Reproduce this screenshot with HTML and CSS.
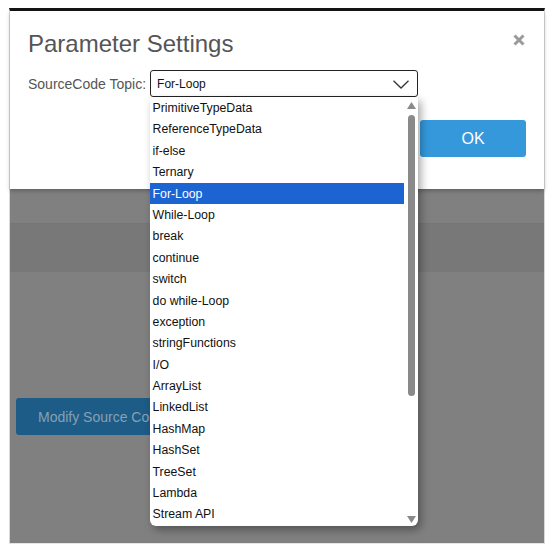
FILE: index.html
```html
<!DOCTYPE html>
<html>
<head>
<meta charset="utf-8">
<link rel="stylesheet" href="styles.css">
</head>
<body>
<div class="frame">
  <div class="modal">
    <div class="modal-head">
      <h1 class="title">Parameter Settings</h1>
      <button class="close" aria-label="close">
        <svg width="12" height="12" viewBox="0 0 12 12"><path d="M1.5 1.5 L10.5 10.5 M10.5 1.5 L1.5 10.5" stroke="#9a9a9a" stroke-width="3" stroke-linecap="butt"/></svg>
      </button>
    </div>
    <div class="field">
      <label class="label">SourceCode Topic:</label>
      <div class="select">
        <span class="select-value">For-Loop</span>
        <svg class="chevron" width="16" height="9" viewBox="0 0 16 9"><polyline points="0.5,0.8 8,8 15.5,0.8" fill="none" stroke="#333" stroke-width="1.3"/></svg>
        <div class="listbox">
          <ul class="options">
            <li>PrimitiveTypeData</li>
            <li>ReferenceTypeData</li>
            <li>if-else</li>
            <li>Ternary</li>
            <li class="selected">For-Loop</li>
            <li>While-Loop</li>
            <li>break</li>
            <li>continue</li>
            <li>switch</li>
            <li>do while-Loop</li>
            <li>exception</li>
            <li>stringFunctions</li>
            <li>I/O</li>
            <li>ArrayList</li>
            <li>LinkedList</li>
            <li>HashMap</li>
            <li>HashSet</li>
            <li>TreeSet</li>
            <li>Lambda</li>
            <li>Stream API</li>
          </ul>
          <div class="scrollbar">
            <svg class="arrow" width="9" height="7" viewBox="0 0 9 7"><polygon points="4.5,0 9,7 0,7" fill="#8a8a8a"/></svg>
            <div class="track"><div class="thumb"></div></div>
            <svg class="arrow" width="9" height="7" viewBox="0 0 9 7"><polygon points="0,0 9,0 4.5,7" fill="#8a8a8a"/></svg>
          </div>
        </div>
      </div>
    </div>
    <div class="actions">
      <button class="ok">OK</button>
    </div>
  </div>
  <div class="gap"></div>
  <div class="band"></div>
  <div class="page-body">
    <button class="modify">Modify Source Code</button>
  </div>
</div>
</body>
</html>
```
FILE: styles.css
```css
* { box-sizing: border-box; }
html, body { margin: 0; padding: 0; background: #ffffff; }
body { font-family: "Liberation Sans", Arial, sans-serif; }

.frame {
  margin: 8px 0 0 9px;
  width: 536px;
  height: 536px;
  border-top: 3px solid #151515;
  border-left: 1px solid #d8d8d8;
  border-right: 1px solid #d8d8d8;
  border-bottom: 1px solid #e4e4e4;
  background: #808080;
  display: flex;
  flex-direction: column;
}

.modal {
  background: #ffffff;
  height: 178px;
  padding: 19px 18px 0 18px;
  display: flex;
  flex-direction: column;
  box-shadow: 0 2px 4px rgba(0,0,0,0.25);
  position: relative;
  z-index: 2;
}

.modal-head {
  display: flex;
  justify-content: space-between;
  align-items: flex-start;
}

.title {
  margin: 0;
  font-size: 24px;
  line-height: 28px;
  font-weight: normal;
  color: #555555;
}

.close {
  border: 0;
  background: none;
  padding: 0;
  margin: 4px 1px 0 0;
  width: 12px;
  height: 12px;
  display: flex;
}

.field {
  margin-top: 12px;
  display: flex;
  align-items: center;
  gap: 4px;
}

.label {
  font-size: 14px;
  color: #555555;
}

.select {
  position: relative;
  width: 268px;
  height: 27px;
  border: 1.5px solid #222;
  border-radius: 3px;
  display: flex;
  align-items: center;
  justify-content: space-between;
  padding: 0 8px 0 6px;
  background: #fff;
}

.select-value {
  font-size: 12px;
  color: #111;
}

.chevron { display: block; margin-top: 1px; }

.listbox {
  position: absolute;
  left: -1.5px;
  top: calc(100% + 1px);
  width: 268px;
  height: 429px;
  background: #ffffff;
  border-radius: 0 0 6px 6px;
  box-shadow: 3px 4px 8px rgba(0,0,0,0.35);
  display: flex;
  z-index: 5;
}

.options {
  list-style: none;
  margin: 0;
  padding: 0;
  width: 254px;
}

.options li {
  height: 21.4px;
  line-height: 21.4px;
  padding: 1px 0 0 3px;
  font-size: 12.3px;
  color: #111;
  white-space: nowrap;
}

.options li.selected {
  background: #1b64d1;
  color: #ffffff;
}

.scrollbar {
  width: 14px;
  display: flex;
  flex-direction: column;
  align-items: center;
  padding: 5px 0 3px 1px;
}

.arrow { display: block; }

.track {
  flex: 1;
  width: 100%;
  display: flex;
  justify-content: center;
  padding-top: 6px;
}

.thumb {
  width: 7px;
  height: 281px;
  background: #8a8a8a;
  border-radius: 4px;
}

.actions {
  margin-top: 23px;
  display: flex;
  justify-content: flex-end;
}

.ok {
  width: 106px;
  height: 37px;
  border: 0;
  border-radius: 3px;
  background: #3498db;
  color: #ffffff;
  font-family: "Liberation Sans", Arial, sans-serif;
  font-size: 16px;
}

.gap { height: 34px; }

.band {
  height: 49px;
  background: #787878;
  border-top: 1px solid #767676;
}

.page-body {
  padding: 126px 0 0 6px;
}

.modify {
  height: 37px;
  border: 0;
  border-radius: 3px;
  background: #1d5c86;
  color: #86a0b5;
  font-family: "Liberation Sans", Arial, sans-serif;
  font-size: 14px;
  padding: 0 22px;
}
```
